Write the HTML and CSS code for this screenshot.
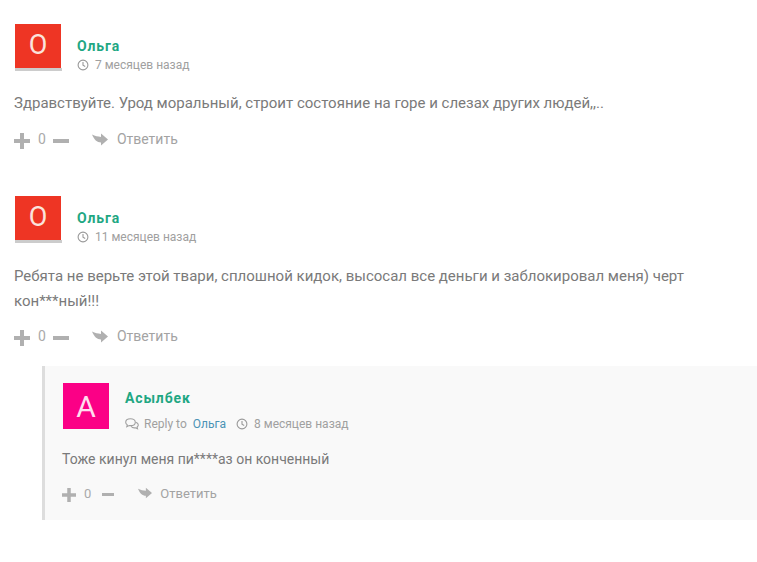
FILE: index.html
```html
<!DOCTYPE html>
<html lang="ru">
<head>
<meta charset="utf-8">
<title>Комментарии</title>
<link rel="stylesheet" href="styles.css">
</head>
<body>
<svg class="defs" width="0" height="0" aria-hidden="true">
  <symbol id="clock" viewBox="0 0 12 12"><circle cx="6" cy="6" r="4.9" fill="none" stroke="currentColor" stroke-width="1.1"/><path d="M6 3v3.2l2.2 1.2" fill="none" stroke="currentColor" stroke-width="1.1"/></symbol>
  <symbol id="plus" viewBox="0 0 16 16"><path d="M6 0h4v6h6v4h-6v6H6v-6H0V6h6z" fill="currentColor"/></symbol>
  <symbol id="minus" viewBox="0 0 16 4"><rect width="16" height="4" fill="currentColor"/></symbol>
  <symbol id="reply" viewBox="0 0 16 13"><path d="M0 1.500C3 3 6 3.500 9 4V.5l7 6-7 6V9.500C5 9.500 2 6.500 0 1.500z" fill="currentColor"/></symbol>
  <symbol id="chat" viewBox="0 0 14 12"><path d="M5.500 .7C2.700 .7 .7 2.200 .7 4.200c0 1.100.6 2 1.600 2.700L1.800 8.700l2.400-1.200c.4.100.9.100 1.300.1 2.800 0 4.800-1.500 4.800-3.400S8.300 .7 5.500 .7z" fill="none" stroke="currentColor" stroke-width="1.100"/><path d="M10.800 4.200c1.500.5 2.500 1.600 2.500 2.800 0 .8-.5 1.500-1.200 2.100l.4 1.700-2.100-1c-1.700.3-3.500-.3-4.300-1.500" fill="none" stroke="currentColor" stroke-width="1.100"/></symbol>
</svg>
<main class="comments">
  <article class="comment first">
    <header class="head">
      <div class="avatar red"><span>О</span></div>
      <div class="meta">
        <div class="name">Ольга</div>
        <div class="info"><svg class="ico-clock"><use href="#clock"/></svg><span>7 месяцев назад</span></div>
      </div>
    </header>
    <p class="text">Здравствуйте. Урод моральный, строит состояние на горе и слезах других людей,,..</p>
    <footer class="actions">
      <svg class="ico-plus"><use href="#plus"/></svg><span class="count">0</span><svg class="ico-minus"><use href="#minus"/></svg>
      <svg class="ico-reply"><use href="#reply"/></svg><span class="answer">Ответить</span>
    </footer>
  </article>
  <article class="comment second">
    <header class="head">
      <div class="avatar red"><span>О</span></div>
      <div class="meta">
        <div class="name">Ольга</div>
        <div class="info"><svg class="ico-clock"><use href="#clock"/></svg><span>11 месяцев назад</span></div>
      </div>
    </header>
    <p class="text">Ребята не верьте этой твари, сплошной кидок, высосал все деньги и заблокировал меня) черт кон***ный!!!</p>
    <footer class="actions">
      <svg class="ico-plus"><use href="#plus"/></svg><span class="count">0</span><svg class="ico-minus"><use href="#minus"/></svg>
      <svg class="ico-reply"><use href="#reply"/></svg><span class="answer">Ответить</span>
    </footer>
  </article>
  <article class="child">
    <header class="head child-head">
      <div class="avatar pink"><span>А</span></div>
      <div class="meta">
        <div class="name">Асылбек</div>
        <div class="info"><svg class="ico-chat"><use href="#chat"/></svg><span class="reply-to">Reply to</span><a class="link">Ольга</a><svg class="ico-clock"><use href="#clock"/></svg><span>8 месяцев назад</span></div>
      </div>
    </header>
    <p class="text child-text">Тоже кинул меня пи****аз он конченный</p>
    <footer class="actions child-actions">
      <svg class="ico-plus"><use href="#plus"/></svg><span class="count">0</span><svg class="ico-minus"><use href="#minus"/></svg>
      <svg class="ico-reply"><use href="#reply"/></svg><span class="answer">Ответить</span>
    </footer>
  </article>
</main>
</body>
</html>
```
FILE: styles.css
```css
* { box-sizing: border-box; }
html, body { margin: 0; padding: 0; background: #fff; }
body { font-family: Roboto, "Liberation Sans", sans-serif; color: #777; height: 562px; overflow: hidden; }
.defs { position: absolute; }
.comments { padding-top: 24px; }
.comment { padding-left: 15px; }
.second { margin-top: 47px; }
.head { display: flex; align-items: flex-start; }
.avatar { width: 46px; height: 46px; display: flex; align-items: center; justify-content: center; flex: none; }
.avatar span { display: block; }
.red { width: 47px; height: 47px; color: #fbe3dc; font-size: 27px; padding: 0 1px 5px 0; background: linear-gradient(#ee3524 0 0) 0 0 / 46px 44px no-repeat, linear-gradient(#ccc 0 0) 0 100% / 47px 3px no-repeat; }
.pink { background: #fb0086; color: #fde; font-size: 30px; }
.meta { margin-left: 15px; padding-top: 13px; }
.pink + .meta { margin-left: 16px; }
.name { font-size: 14px; font-weight: 700; color: #1fa783; letter-spacing: .85px; line-height: 18px; }
.info { display: flex; align-items: center; font-size: 12px; line-height: 16px; color: #a0a0a0; margin-top: 2px; }
.ico-clock { width: 12px; height: 12px; margin-right: 6px; color: #999; }
.text { margin: 18px 0 0 -1px; font-size: 15px; line-height: 25px; color: #7a7a7a; }
.second .text { margin-top: 19px; }
.actions { display: flex; align-items: center; margin: 13px 0 0 -1px; height: 20px; color: #b0b0b0; }
.second .actions { margin-top: 12px; }
.ico-plus { width: 16px; height: 16px; margin-top: 3px; }
.count { font-size: 14px; margin: 0 7px 0 8px; color: #aaa; }
.ico-minus { width: 16px; height: 4px; margin-top: 3px; }
.ico-reply { width: 16px; height: 13px; margin-left: 23px; margin-right: 9px; }
.answer { font-size: 14px; color: #a3a3a3; }
.child { margin: 20px 0 0 42px; height: 154px; background: #f9f9f9; border-left: 3px solid #ddd; padding: 17px 0 0 18px; }
.ico-chat { width: 14px; height: 12px; margin-right: 5px; color: #a0a0a0; }
.reply-to { margin-right: 6px; }
.link { color: #4b93b5; margin-right: 10px; }
.child-head .meta { padding-top: 6px; }
.child-head .info { margin-top: 9px; }
.child-text { margin-top: 15px; font-size: 14px; }
.child-actions { margin-top: 11px; }
.child-actions .ico-plus { width: 14px; height: 14px; }
.child-actions .ico-minus { width: 14px; height: 3px; }
.child-actions .count { font-size: 13px; margin: 0 10px 0 8px; }
.child-actions .ico-reply { width: 14px; height: 12px; margin-left: 23px; margin-right: 8px; }
.child-actions .answer { font-size: 13px; }
```
